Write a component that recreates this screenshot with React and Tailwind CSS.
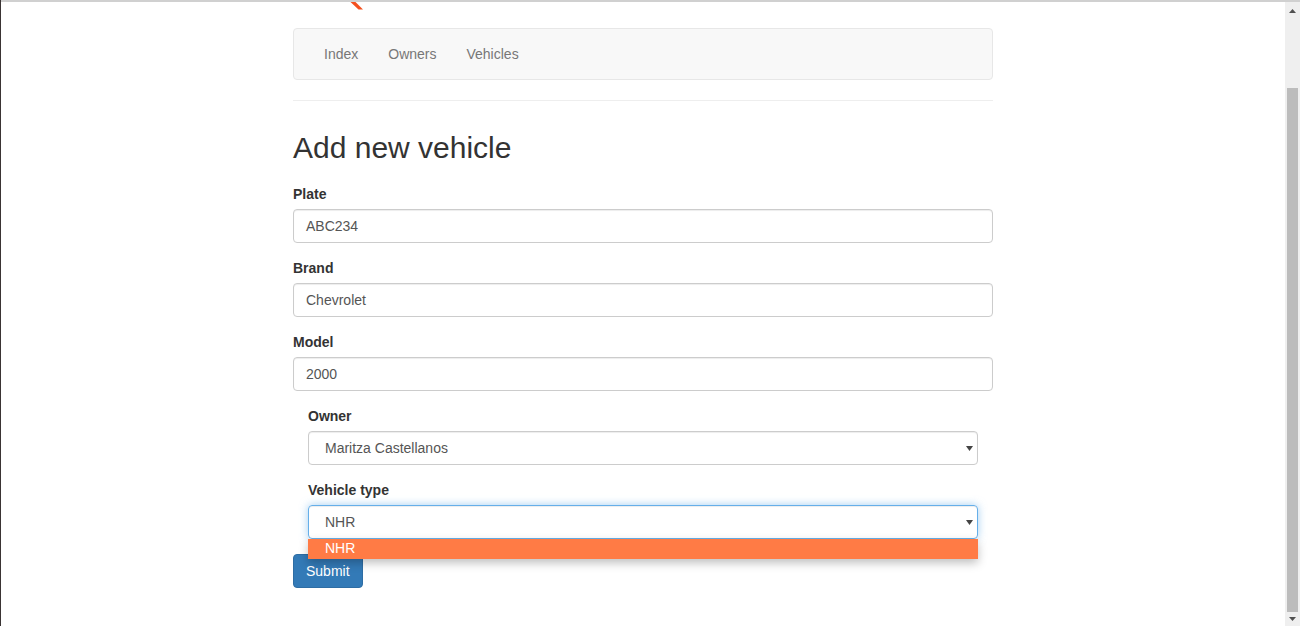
import React from "react";

const Caret = () => (
  <svg width="7" height="5" viewBox="0 0 7 5" className="block">
    <polygon points="0,0 7,0 3.5,5" fill="#444" />
  </svg>
);

function TextField({ label, value }) {
  return (
    <div className="mb-[15px]">
      <label className="block text-[14px] leading-[20px] font-bold text-[#333] mb-[5px]">
        {label}
      </label>
      <div className="h-[34px] border border-[#ccc] rounded-[4px] px-[12px] flex items-center text-[14px] text-[#555] shadow-[inset_0_1px_1px_rgba(0,0,0,0.075)]">
        {value}
      </div>
    </div>
  );
}

function SelectField({ label, value, focused, children }) {
  return (
    <div className="mb-[15px]">
      <label className="block text-[14px] leading-[20px] font-bold text-[#333] mb-[5px]">
        {label}
      </label>
      <div className="relative">
        <div
          className={
            focused
              ? "h-[34px] border border-[#66afe9] rounded-[4px] pl-[16px] pr-[4px] flex items-center justify-between text-[14px] text-[#555] shadow-[inset_0_1px_1px_rgba(0,0,0,0.075),0_0_8px_rgba(102,175,233,0.6)]"
              : "h-[34px] border border-[#ccc] rounded-[4px] pl-[16px] pr-[4px] flex items-center justify-between text-[14px] text-[#555] shadow-[inset_0_1px_1px_rgba(0,0,0,0.075)]"
          }
        >
          <span>{value}</span>
          <Caret />
        </div>
        {children}
      </div>
    </div>
  );
}

export default function App() {
  return (
    <div className="h-[626px] w-full overflow-hidden bg-white border-l border-[#3a3434] flex flex-col font-['Liberation_Sans','Helvetica_Neue',Arial,sans-serif]">
      <div className="h-[2px] bg-[#d0d0d0] shrink-0" />
      <div className="flex flex-1 min-h-0">
        <main className="flex-1">
          <div className="w-[700px] mx-auto">
            {/* logo, mostly scrolled away */}
            <div className="h-[26px]">
              <svg width="14" height="8" viewBox="0 0 14 8" className="block ml-[57px]">
                <path d="M0.5 0 L5.5 0 L13 7.5 L8.5 7.5 Z" fill="#f4501e" />
              </svg>
            </div>

            <nav className="h-[52px] border border-[#e7e7e7] bg-[#f8f8f8] rounded-[4px] flex items-center px-[15px]">
              {["Index", "Owners", "Vehicles"].map((l) => (
                <a key={l} className="px-[15px] text-[14px] leading-[20px] text-[#777]">
                  {l}
                </a>
              ))}
            </nav>

            <hr className="mt-[20px] border-0 border-t border-[#eee]" />

            <h2 className="mt-[30px] text-[30px] leading-[33px] font-normal text-[#333]">
              Add new vehicle
            </h2>

            <form className="mt-[20px]">
              <TextField label="Plate" value="ABC234" />
              <TextField label="Brand" value="Chevrolet" />
              <TextField label="Model" value="2000" />

              <div className="px-[15px]">
                <SelectField label="Owner" value="Maritza Castellanos" />
                <SelectField label="Vehicle type" value="NHR" focused>
                  <div className="absolute left-0 right-0 top-full z-10 bg-white shadow-[0_4px_10px_rgba(0,0,0,0.25)]">
                    <div className="h-[20px] bg-[#ff7b45] pl-[17px] pb-[1px] flex items-center text-[14px] text-white">
                      NHR
                    </div>
                  </div>
                </SelectField>
              </div>

              <button
                type="button"
                className="h-[34px] px-[12px] bg-[#337ab7] border border-[#2e6da4] rounded-[4px] text-[14px] text-white"
              >
                Submit
              </button>
            </form>
          </div>
        </main>

        {/* scrollbar */}
        <div className="w-[15px] bg-[#efefef] flex flex-col shrink-0">
          <div className="h-[17px] flex items-center justify-center">
            <svg width="7" height="4" viewBox="0 0 7 4">
              <polygon points="3.5,0 7,4 0,4" fill="#505050" />
            </svg>
          </div>
          <div className="mt-[69px] h-[524px] mx-[2px] bg-[#bcbcbc]" />
          <div className="flex-1 flex items-center justify-center">
            <svg width="7" height="4" viewBox="0 0 7 4">
              <polygon points="0,0 7,0 3.5,4" fill="#505050" />
            </svg>
          </div>
        </div>
      </div>
    </div>
  );
}
